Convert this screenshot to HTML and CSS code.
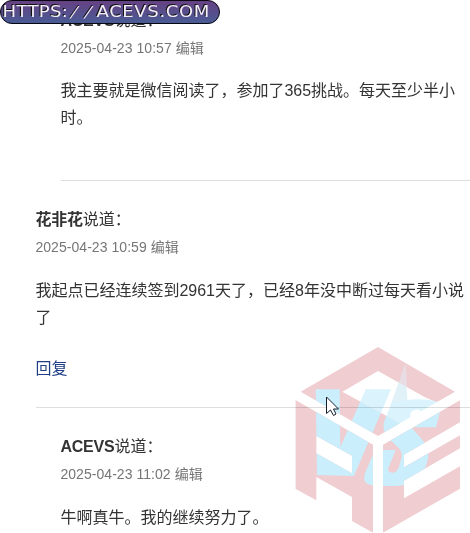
FILE: index.html
```html
<!DOCTYPE html>
<html lang="zh-CN">
<head>
<meta charset="utf-8">
<title>评论</title>
<link rel="stylesheet" href="styles.css">
</head>
<body>
<main class="comments">
  <article class="comment reply first">
    <header><b>ACEVS</b>说道：</header>
    <div class="meta">2025-04-23 10:57 编辑</div>
    <p>我主要就是微信阅读了，参加了365挑战。每天至少半小<br>时。</p>
  </article>
  <article class="comment parent">
    <header><b>花非花</b>说道：</header>
    <div class="meta">2025-04-23 10:59 编辑</div>
    <p>我起点已经连续签到2961天了，已经8年没中断过每天看小说<br>了</p>
    <a class="answer">回复</a>
  </article>
  <article class="comment reply last">
    <header><b>ACEVS</b>说道：</header>
    <div class="meta">2025-04-23 11:02 编辑</div>
    <p>牛啊真牛。我的继续努力了。</p>
  </article>
</main>
<svg class="banner" width="220" height="24" viewBox="0 0 220 24">
  <defs><linearGradient id="g" x1="0" y1="0" x2="0" y2="1"><stop offset="0" stop-color="#674083"/><stop offset="1" stop-color="#485c94"/></linearGradient></defs>
  <rect x=".5" y=".5" width="219" height="23" rx="11.5" fill="url(#g)" stroke="#080812"/>
  <g class="url">
    <text transform="translate(2.5 16.5) scale(1.2 1)" textLength="54.5">HTTPS:</text>
    <text transform="translate(70 16.5) skewX(-22)" textLength="19">//</text>
    <text transform="translate(96.5 16.5) scale(1.2 1)" textLength="94">ACEVS.COM</text>
  </g>
</svg>
<svg class="mark" width="185" height="193" viewBox="0 0 555 579">
  <defs>
    <clipPath id="faces">
      <path d="M279 21 510 155 455 187 420 172 279 93 172 155 345 250 279 288 47 155Z"/>
      <path d="M31 180 264 314V578L201 543V471L94 411V481L31 446V180L94 216V288V340L201 400V347L94 288V216Z" clip-rule="evenodd"/>
      <path d="M525 181V247L357 344V382L525 286V325L357 422V475L525 379V446L294 578V314Z"/>
    </clipPath>
    <clipPath id="opening"><path d="M279 93 172 155 345 250 455 187 420 172Z"/></clipPath>
    <g id="letters">
      <path d="M92 148H164L166 322 242 148H318L207 408 96 405Z"/>
      <path d="M320 190Q375 174 430 179L472 188 453 262H380C390 280 435 310 430 350C420 402 395 436 330 438H280C242 438 232 425 240 400L270 330H332L310 385C306 402 335 405 342 380L350 350C355 325 322 312 303 284Q290 265 299 240Z"/>
    </g>
  </defs>
  <g clip-path="url(#faces)">
    <rect width="555" height="579" fill="#efcdd1"/>
    <path d="M362 68 331 155H367Z" fill="#e8dde4"/>
    <use href="#letters" fill="#caeefb"/>
  </g>
  <g clip-path="url(#opening)">
    <path d="M362 68 315 200H368Z" fill="#e1f1f8"/>
    <use href="#letters" fill="#daf3fd"/>
    <path d="M376 233V222A19 17 0 0 1 410 216L425 225 370 250Z" fill="#fff"/>
  </g>
</svg>
<svg class="cursor" width="14" height="22" viewBox="0 0 14 22"><path d="M.5 1V17.5L4.5 14 7.5 19.5 10 18 7.5 13H12.5Z" fill="#fff" stroke="#14202c"/></svg>
</body>
</html>
```
FILE: styles.css
```css
body { margin: 0; width: 470px; height: 533px; overflow: hidden; background: #fff; color: #333; font: 16px/27px "Liberation Sans", "Noto Sans CJK SC", sans-serif; }
.comments { height: 533px; overflow: hidden; }
.comment { border-bottom: 1px solid #ddd; white-space: nowrap; }
.comment > * { position: relative; left: -.6px; }
header { line-height: 28px; }
b { letter-spacing: -.2px; }
.reply { margin-left: 61px; }
.parent { margin-left: 36px; padding-top: 25px; }
.meta { color: #767676; font-size: 14px; letter-spacing: .05px; }
p { margin: 16px 0 0; }
.comment.first { padding: 7px 0 49px; }
.first p { margin-top: 15px; }
.comment.last { padding-top: 25px; border: 0; }
.answer { display: block; margin-top: 24px; padding-bottom: 25px; color: #213f87; }
.banner, .mark, .cursor { position: absolute; }
.banner { left: 0; top: 0; }
.url { font: 15px "DejaVu Sans", sans-serif; fill: #f4eef8; text-shadow: -1px -1px 0 #111; }
.mark { left: 285px; top: 340px; mix-blend-mode: multiply; }
.cursor { left: 326px; top: 396px; }
```
